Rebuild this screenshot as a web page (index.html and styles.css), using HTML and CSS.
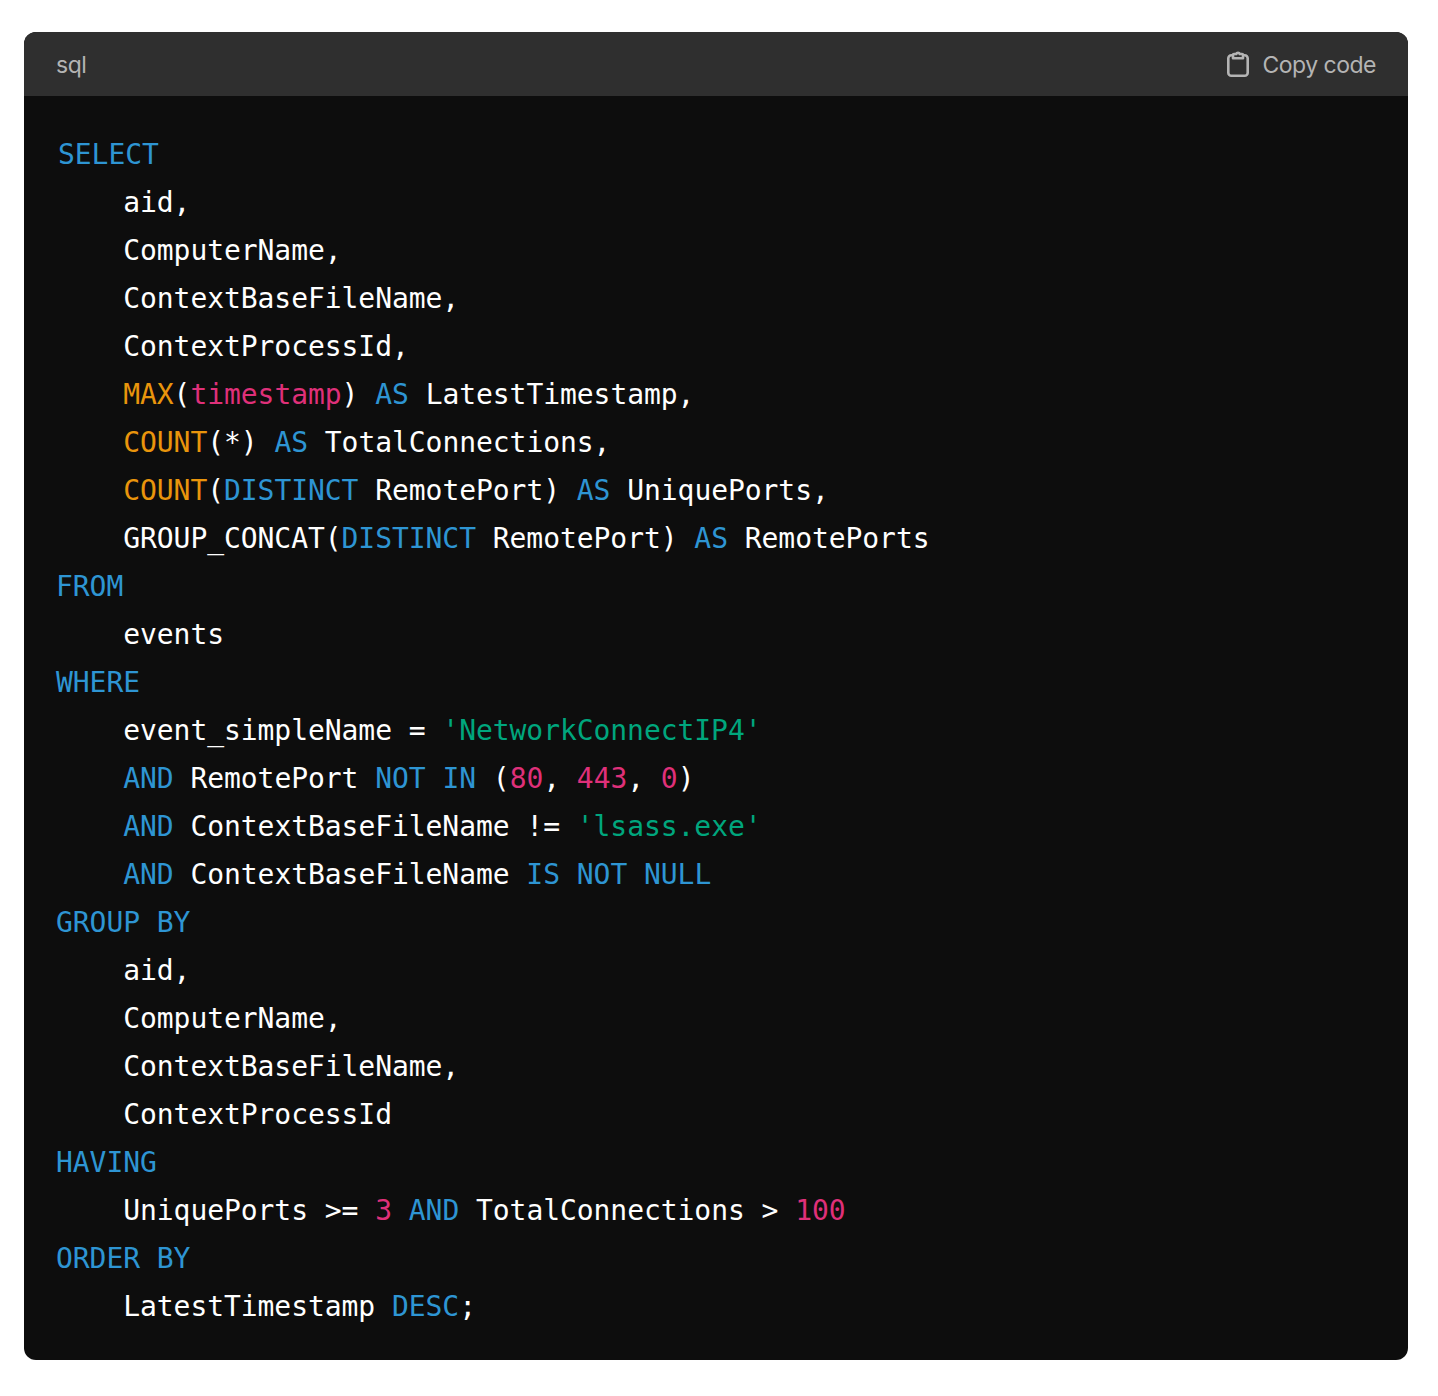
FILE: index.html
```html
<!DOCTYPE html>
<html lang="en">
<head>
  <meta charset="UTF-8">
  <meta name="viewport" content="width=device-width, initial-scale=1.0">
  <title>sql</title>
  <link rel="stylesheet" href="styles.css">
</head>
<body>
  <div class="code-block">
    <div class="code-header">
      <span class="code-lang">sql</span>
      <button class="copy-btn">
        <svg class="copy-icon" width="28" height="28" viewBox="0 0 28 28" fill="none" stroke="currentColor" stroke-width="2.6" stroke-linejoin="round">
          <path d="M9 5.300H7.300a3 3 0 0 0-3 3V22.700a3 3 0 0 0 3 3h13.400a3 3 0 0 0 3-3V8.300a3 3 0 0 0-3-3H19"/>
          <path d="M9 8.300V5a1 1 0 0 1 1-1h2.200a1.900 1.900 0 0 1 3.600 0H18a1 1 0 0 1 1 1v3.300z"/>
        </svg>
        Copy code
      </button>
    </div>
    <pre class="code-body"><code><span class="kw first">SELECT</span>
    aid,
    ComputerName,
    ContextBaseFileName,
    ContextProcessId,
    <span class="fn">MAX</span>(<span class="num">timestamp</span>) <span class="kw">AS</span> LatestTimestamp,
    <span class="fn">COUNT</span>(*) <span class="kw">AS</span> TotalConnections,
    <span class="fn">COUNT</span>(<span class="kw">DISTINCT</span> RemotePort) <span class="kw">AS</span> UniquePorts,
    GROUP_CONCAT(<span class="kw">DISTINCT</span> RemotePort) <span class="kw">AS</span> RemotePorts
<span class="kw">FROM</span>
    events
<span class="kw">WHERE</span>
    event_simpleName = <span class="str">'NetworkConnectIP4'</span>
    <span class="kw">AND</span> RemotePort <span class="kw">NOT</span> <span class="kw">IN</span> (<span class="num">80</span>, <span class="num">443</span>, <span class="num">0</span>)
    <span class="kw">AND</span> ContextBaseFileName != <span class="str">'lsass.exe'</span>
    <span class="kw">AND</span> ContextBaseFileName <span class="kw">IS</span> <span class="kw">NOT</span> <span class="kw">NULL</span>
<span class="kw">GROUP</span> <span class="kw">BY</span>
    aid,
    ComputerName,
    ContextBaseFileName,
    ContextProcessId
<span class="kw">HAVING</span>
    UniquePorts &gt;= <span class="num">3</span> <span class="kw">AND</span> TotalConnections &gt; <span class="num">100</span>
<span class="kw">ORDER</span> <span class="kw">BY</span>
    LatestTimestamp <span class="kw">DESC</span>;</code></pre>
  </div>
</body>
</html>
```
FILE: styles.css
```css
body {
  margin: 0;
  padding: 32px 30px 36px 24px;
  background-color: #ffffff;
}

.code-block {
  background-color: #0d0d0d;
  border-radius: 12px;
  overflow: hidden;
}

.code-header {
  display: flex;
  justify-content: space-between;
  align-items: center;
  height: 64px;
  padding: 0 32px;
  background-color: #2f2f2f;
  color: #b4b4b4;
  font-family: 'Inter', sans-serif;
  font-size: 23px;
  letter-spacing: -0.5px;
}

.code-lang {
  padding-top: 1px;
}

.copy-btn {
  display: flex;
  align-items: center;
  gap: 10px;
  padding: 1px 0 0;
  border: none;
  background: none;
  color: inherit;
  font: inherit;
  letter-spacing: inherit;
}

.copy-icon {
  margin-top: -1px;
}

.code-body {
  margin: 0;
  padding: 35px 32px 29px;
  color: #ffffff;
  font-family: 'DejaVu Sans Mono', monospace;
  font-size: 28px;
  line-height: 48px;
  letter-spacing: -0.06px;
}

.code-body code {
  font-family: inherit;
  font-size: inherit;
}

.kw {
  color: #2e95d3;
}

.first {
  margin-left: 2px;
}

.fn {
  color: #e9950c;
}

.num {
  color: #df3079;
}

.str {
  color: #00a67d;
}
```
